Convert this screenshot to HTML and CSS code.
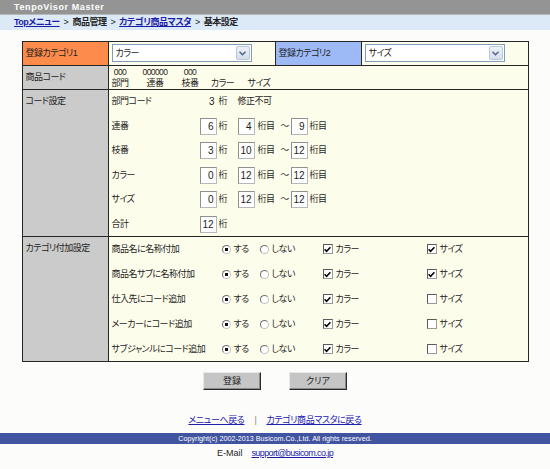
FILE: index.html
```html
<!DOCTYPE html>
<html lang="ja">
<head>
<meta charset="utf-8">
<title>TenpoVisor Master</title>
<link rel="stylesheet" href="styles.css">
</head>
<body>
<div class="topbar">TenpoVisor Master</div>
<div class="crumbs"><a href="#">Topメニュー</a><span class="gt">&gt;</span>商品管理<span class="gt">&gt;</span><a href="#">カテゴリ商品マスタ</a><span class="gt">&gt;</span>基本設定</div>

<form class="main">
  <table class="grid">
    <colgroup><col class="c-lab"><col class="c-val"><col class="c-lab"><col class="c-val"></colgroup>
    <tr class="r-cat">
      <th class="lab-orange">登録カテゴリ1</th>
      <td class="v-sel">
        <div class="sel"><select><option>カラー</option></select><span class="arrow"><svg width="7" height="5" viewBox="0 0 7 5"><path d="M0.5 0.8 L3.5 3.8 L6.5 0.8" fill="none" stroke="#4d6185" stroke-width="1.4"/></svg></span></div>
      </td>
      <th class="lab-blue">登録カテゴリ2</th>
      <td class="v-sel">
        <div class="sel"><select><option>サイズ</option></select><span class="arrow"><svg width="7" height="5" viewBox="0 0 7 5"><path d="M0.5 0.8 L3.5 3.8 L6.5 0.8" fill="none" stroke="#4d6185" stroke-width="1.4"/></svg></span></div>
      </td>
    </tr>
    <tr class="r-code">
      <th>商品コード</th>
      <td colspan="3" class="v-code">
        <div class="codegrid">
          <span class="dg">000</span><span class="dg">000000</span><span class="dg">000</span><span></span><span></span>
          <span>部門</span><span>連番</span><span>枝番</span><span>カラー</span><span>サイズ</span>
        </div>
      </td>
    </tr>
    <tr class="r-digits">
      <th>コード設定</th>
      <td colspan="3" class="v-digits">
        <div class="digits">
          <span class="dl">部門コード</span><span class="fixed">3</span><span class="u">桁</span><span class="note">修正不可</span>

          <span class="dl">連番</span><input class="num" value="6"><span class="u">桁</span><input class="num" value="4"><span class="u">桁目</span><span class="t">～</span><input class="num" value="9"><span class="u">桁目</span>

          <span class="dl">枝番</span><input class="num" value="3"><span class="u">桁</span><input class="num" value="10"><span class="u">桁目</span><span class="t">～</span><input class="num" value="12"><span class="u">桁目</span>

          <span class="dl">カラー</span><input class="num" value="0"><span class="u">桁</span><input class="num" value="12"><span class="u">桁目</span><span class="t">～</span><input class="num" value="12"><span class="u">桁目</span>

          <span class="dl">サイズ</span><input class="num" value="0"><span class="u">桁</span><input class="num" value="12"><span class="u">桁目</span><span class="t">～</span><input class="num" value="12"><span class="u">桁目</span>

          <span class="dl">合計</span><input class="num" value="12"><span class="u">桁</span>
        </div>
      </td>
    </tr>
    <tr class="r-opts">
      <th>カテゴリ付加設定</th>
      <td colspan="3" class="v-opts">
        <div class="opts">
          <span class="ol">商品名に名称付加</span>
          <span class="item"><span class="radio on"></span>する</span>
          <span class="item"><span class="radio"></span>しない</span>
          <span class="item"><span class="check"><svg width="7" height="7" viewBox="0 0 7 7"><path d="M0.6 3.3 L2.6 5.3 L6.4 1.2" fill="none" stroke="#000" stroke-width="1.5"/></svg></span>カラー</span>
          <span class="item"><span class="check"><svg width="7" height="7" viewBox="0 0 7 7"><path d="M0.6 3.3 L2.6 5.3 L6.4 1.2" fill="none" stroke="#000" stroke-width="1.5"/></svg></span>サイズ</span>

          <span class="ol">商品名サブに名称付加</span>
          <span class="item"><span class="radio on"></span>する</span>
          <span class="item"><span class="radio"></span>しない</span>
          <span class="item"><span class="check"><svg width="7" height="7" viewBox="0 0 7 7"><path d="M0.6 3.3 L2.6 5.3 L6.4 1.2" fill="none" stroke="#000" stroke-width="1.5"/></svg></span>カラー</span>
          <span class="item"><span class="check"><svg width="7" height="7" viewBox="0 0 7 7"><path d="M0.6 3.3 L2.6 5.3 L6.4 1.2" fill="none" stroke="#000" stroke-width="1.5"/></svg></span>サイズ</span>

          <span class="ol">仕入先にコード追加</span>
          <span class="item"><span class="radio on"></span>する</span>
          <span class="item"><span class="radio"></span>しない</span>
          <span class="item"><span class="check"><svg width="7" height="7" viewBox="0 0 7 7"><path d="M0.6 3.3 L2.6 5.3 L6.4 1.2" fill="none" stroke="#000" stroke-width="1.5"/></svg></span>カラー</span>
          <span class="item"><span class="check"></span>サイズ</span>

          <span class="ol">メーカーにコード追加</span>
          <span class="item"><span class="radio on"></span>する</span>
          <span class="item"><span class="radio"></span>しない</span>
          <span class="item"><span class="check"><svg width="7" height="7" viewBox="0 0 7 7"><path d="M0.6 3.3 L2.6 5.3 L6.4 1.2" fill="none" stroke="#000" stroke-width="1.5"/></svg></span>カラー</span>
          <span class="item"><span class="check"></span>サイズ</span>

          <span class="ol">サブジャンルにコード追加</span>
          <span class="item"><span class="radio on"></span>する</span>
          <span class="item"><span class="radio"></span>しない</span>
          <span class="item"><span class="check"><svg width="7" height="7" viewBox="0 0 7 7"><path d="M0.6 3.3 L2.6 5.3 L6.4 1.2" fill="none" stroke="#000" stroke-width="1.5"/></svg></span>カラー</span>
          <span class="item"><span class="check"></span>サイズ</span>
        </div>
      </td>
    </tr>
  </table>

  <div class="buttons">
    <button type="button" class="btn">登録</button>
    <button type="button" class="btn">クリア</button>
  </div>
</form>

<div class="links"><a href="#">メニューへ戻る</a><span class="sep">|</span><a href="#">カテゴリ商品マスタに戻る</a></div>
<div class="copy">Copyright(c) 2002-2013 Busicom.Co.,Ltd. All rights reserved.</div>
<div class="mail"><span class="mail-label">E-Mail</span><a href="#">support@busicom.co.jp</a></div>
</body>
</html>
```

FILE: styles.css
```css
* { box-sizing: border-box; }

html, body {
  margin: 0;
  padding: 0;
}

body {
  background: #fcfcfb;
  color: #1e1e1e;
  font-family: "Liberation Sans", "Noto Sans CJK JP", sans-serif;
  font-size: 9px;
  line-height: 12px;
  letter-spacing: -0.5px;
  font-feature-settings: "palt";
}

a { color: #1c1ca8; }

.topbar {
  height: 15px;
  background: #949494;
  border-bottom: 1px solid #b9b9b9;
  color: #ffffff;
  font-weight: bold;
  font-size: 9px;
  line-height: 14px;
  padding-left: 14px;
  letter-spacing: 0.6px;
}

.crumbs {
  height: 15px;
  background: #dce9f6;
  padding-left: 14px;
  font-weight: bold;
  font-size: 9px;
  line-height: 15px;
  letter-spacing: -0.5px;
  color: #222;
}
.crumbs a { color: #1c1ca8; }
.crumbs .gt { padding: 0 4px; font-weight: normal; }

.main { margin: 0; }

.grid {
  width: 506px;
  margin: 11px auto 0;
  border-collapse: collapse;
  table-layout: fixed;
  border: 1px solid #262626;
}
.c-lab { width: 86px; }
.c-val { width: 167px; }

.grid th, .grid td {
  border: 1px solid #262626;
  padding: 0;
  vertical-align: top;
  text-align: left;
  font-weight: normal;
}
.grid th {
  background: #cbcbcb;
  padding: 5px 3px 0 3px;
}
.grid td { background: #fdfdeb; }

.grid th.lab-orange { background: #fc8b4c; }
.grid th.lab-blue { background: #9db9f6; }

.r-cat th, .r-cat td { height: 24px; }
.v-sel { padding: 2px 0 0 3px !important; }

.sel {
  position: relative;
  width: 140px;
  height: 18px;
}
.sel select {
  appearance: none;
  -webkit-appearance: none;
  width: 100%;
  height: 18px;
  border: 1px solid #7f9db9;
  background: #ffffff;
  font: inherit;
  letter-spacing: -0.5px;
  color: #1e1e1e;
  padding: 0 0 0 3px;
  border-radius: 0;
  outline: none;
}
.sel .arrow {
  position: absolute;
  right: 2px;
  top: 2px;
  width: 14px;
  height: 14px;
  background: linear-gradient(#eef2f8, #d4ddea);
  border: 1px solid #b8c6da;
  border-radius: 2px;
  display: flex;
  align-items: center;
  justify-content: center;
  pointer-events: none;
}

.r-code th, .r-code td { height: 24px; }
.v-code { padding: 1px 0 0 0 !important; }
.codegrid {
  display: grid;
  grid-template-columns: 4px 15px 55px 15px 50px 23px;
  grid-template-rows: 11px 11px;
  line-height: 11px;
  justify-items: center;
  white-space: nowrap;
}
.codegrid::before { content: ""; grid-row: 1 / 3; grid-column: 1; }
.codegrid .dg { font-size: 8.5px; letter-spacing: -0.6px; }

.v-digits { padding: 3px 0 3px 3px !important; }
.digits {
  display: grid;
  grid-template-columns: 88px 17px 21px 18px 23px 12px 17px auto;
  grid-auto-rows: 17px;
  row-gap: 7.6px;
  align-items: center;
  line-height: 17px;
  white-space: nowrap;
}
.dl { grid-column: 1; }
.fixed { text-align: right; padding-right: 2px; font-size: 10px; letter-spacing: 0; }
.note { grid-column: 4 / 9; }
.u { padding-left: 2px; }
.t { text-align: center; color: #333; }

.num {
  width: 17px;
  height: 17px;
  border: 1px solid #b8b8b8;
  border-top-color: #909090;
  border-left-color: #909090;
  background: #ffffff;
  font: inherit;
  font-size: 10px;
  letter-spacing: 0;
  line-height: 15px;
  color: #1e1e1e;
  text-align: right;
  padding: 0 2px 0 0;
  margin: 0;
  border-radius: 0;
}

.v-opts { padding: 4px 0 3px 3px !important; }
.opts {
  display: grid;
  grid-template-columns: 110px 38px 63px 104px auto;
  grid-auto-rows: 17px;
  row-gap: 8px;
  align-items: center;
  white-space: nowrap;
}
.item {
  display: inline-flex;
  align-items: center;
  gap: 3px;
}
.radio {
  display: inline-block;
  width: 9px;
  height: 9px;
  border-radius: 50%;
  border: 1px solid #6f6f6f;
  border-right-color: #c4c4c4;
  border-bottom-color: #c4c4c4;
  background: #ffffff;
}
.radio.on {
  background: radial-gradient(circle, #111 0 1.5px, #ffffff 2px);
}
.check {
  display: inline-flex;
  align-items: center;
  justify-content: center;
  width: 10px;
  height: 10px;
  border: 1px solid #5a5a5a;
  border-right-color: #9a9a9a;
  border-bottom-color: #9a9a9a;
  background: #ffffff;
}

.buttons {
  display: flex;
  justify-content: center;
  gap: 28px;
  margin-top: 10px;
}
.btn {
  width: 58px;
  height: 18px;
  margin: 0;
  padding: 0;
  background: #c5c5c5;
  border: 1px solid #e8e8e8;
  border-right-color: #2a2a2a;
  border-bottom-color: #2a2a2a;
  box-shadow: inset -1px -1px 0 #8a8a8a;
  font: inherit;
  color: #1e1e1e;
  border-radius: 0;
}

.links {
  margin-top: 24px;
  text-align: center;
  line-height: 12px;
  letter-spacing: -0.4px;
}
.links a { color: #2020b0; }
.links .sep { color: #888; padding: 0 10px; }

.copy {
  margin-top: 7px;
  height: 11px;
  background: #40549f;
  color: #ffffff;
  font-size: 7.2px;
  letter-spacing: 0;
  line-height: 11px;
  text-align: center;
}

.mail {
  margin-top: 3px;
  text-align: center;
  font-size: 9px;
  letter-spacing: 0;
  line-height: 12px;
}
.mail-label { margin-right: 9px; }
.mail a { color: #1c1ca8; font-size: 9px; letter-spacing: -0.6px; }
```
